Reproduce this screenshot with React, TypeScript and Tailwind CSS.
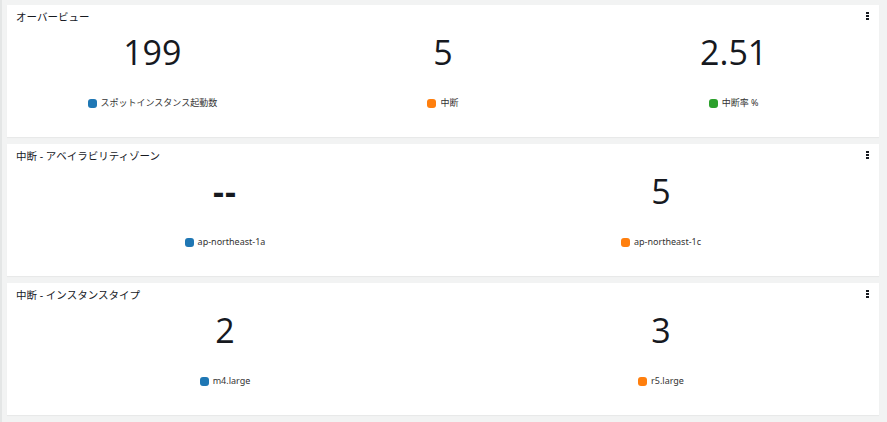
import React from "react";

type Item = { value: string; label: string; color: string; bold?: boolean };

const Kebab = () => (
  <div className="flex flex-col gap-[1px] mt-[2px]">
    <span className="block w-[3px] h-[2px] bg-[#16191f]" />
    <span className="block w-[3px] h-[2px] bg-[#16191f]" />
    <span className="block w-[3px] h-[2px] bg-[#16191f]" />
  </div>
);

const Card = ({ title, items, cols }: { title: string; items: Item[]; cols: 2 | 3 }) => (
  <div className="bg-white h-[132px] flex flex-col shadow-[0_1px_1px_rgba(0,0,0,0.04)]">
    <div className="h-[24px] flex items-start justify-between pl-[9px] pr-[10px] pt-[5px]">
      <span className="text-[10.5px] leading-[14px] text-[#16191f]">{title}</span>
      <Kebab />
    </div>
    <div className={cols === 3 ? "grid grid-cols-3" : "grid grid-cols-2"}>
      {items.map((it) => (
        <div key={it.label} className="flex flex-col items-center">
          <div
            className={
              it.bold
                ? "mt-[3px] h-[40px] leading-[40px] text-[34px] text-[#16191f] font-bold tracking-[1px]"
                : "mt-[3px] h-[40px] leading-[40px] text-[34px] text-[#16191f]"
            }
            style={{ fontFamily: '"Open Sans", sans-serif' }}
          >
            {it.value}
          </div>
          <div className="mt-[25px] flex items-center gap-[4px] h-[12px]">
            <span className="block w-[9px] h-[9px] rounded-[3px]" style={{ backgroundColor: it.color }} />
            <span className="text-[9px] leading-[12px] text-[#333]">{it.label}</span>
          </div>
        </div>
      ))}
    </div>
  </div>
);

export default function App() {
  return (
    <div
      className="w-[887px] h-[422px] bg-[#f2f3f3] border-l-2 border-[#e4e6e6] pl-[5px] pr-[8px] pt-[5px] flex flex-col gap-[7px] overflow-hidden"
      style={{ fontFamily: '"Noto Sans", "Noto Sans CJK JP", sans-serif' }}
    >
      <Card
        title="オーバービュー"
        cols={3}
        items={[
          { value: "199", label: "スポットインスタンス起動数", color: "#1f77b4" },
          { value: "5", label: "中断", color: "#ff7f0e" },
          { value: "2.51", label: "中断率 %", color: "#2ca02c" },
        ]}
      />
      <Card
        title="中断 - アベイラビリティゾーン"
        cols={2}
        items={[
          { value: "--", label: "ap-northeast-1a", color: "#1f77b4", bold: true },
          { value: "5", label: "ap-northeast-1c", color: "#ff7f0e" },
        ]}
      />
      <Card
        title="中断 - インスタンスタイプ"
        cols={2}
        items={[
          { value: "2", label: "m4.large", color: "#1f77b4" },
          { value: "3", label: "r5.large", color: "#ff7f0e" },
        ]}
      />
    </div>
  );
}
